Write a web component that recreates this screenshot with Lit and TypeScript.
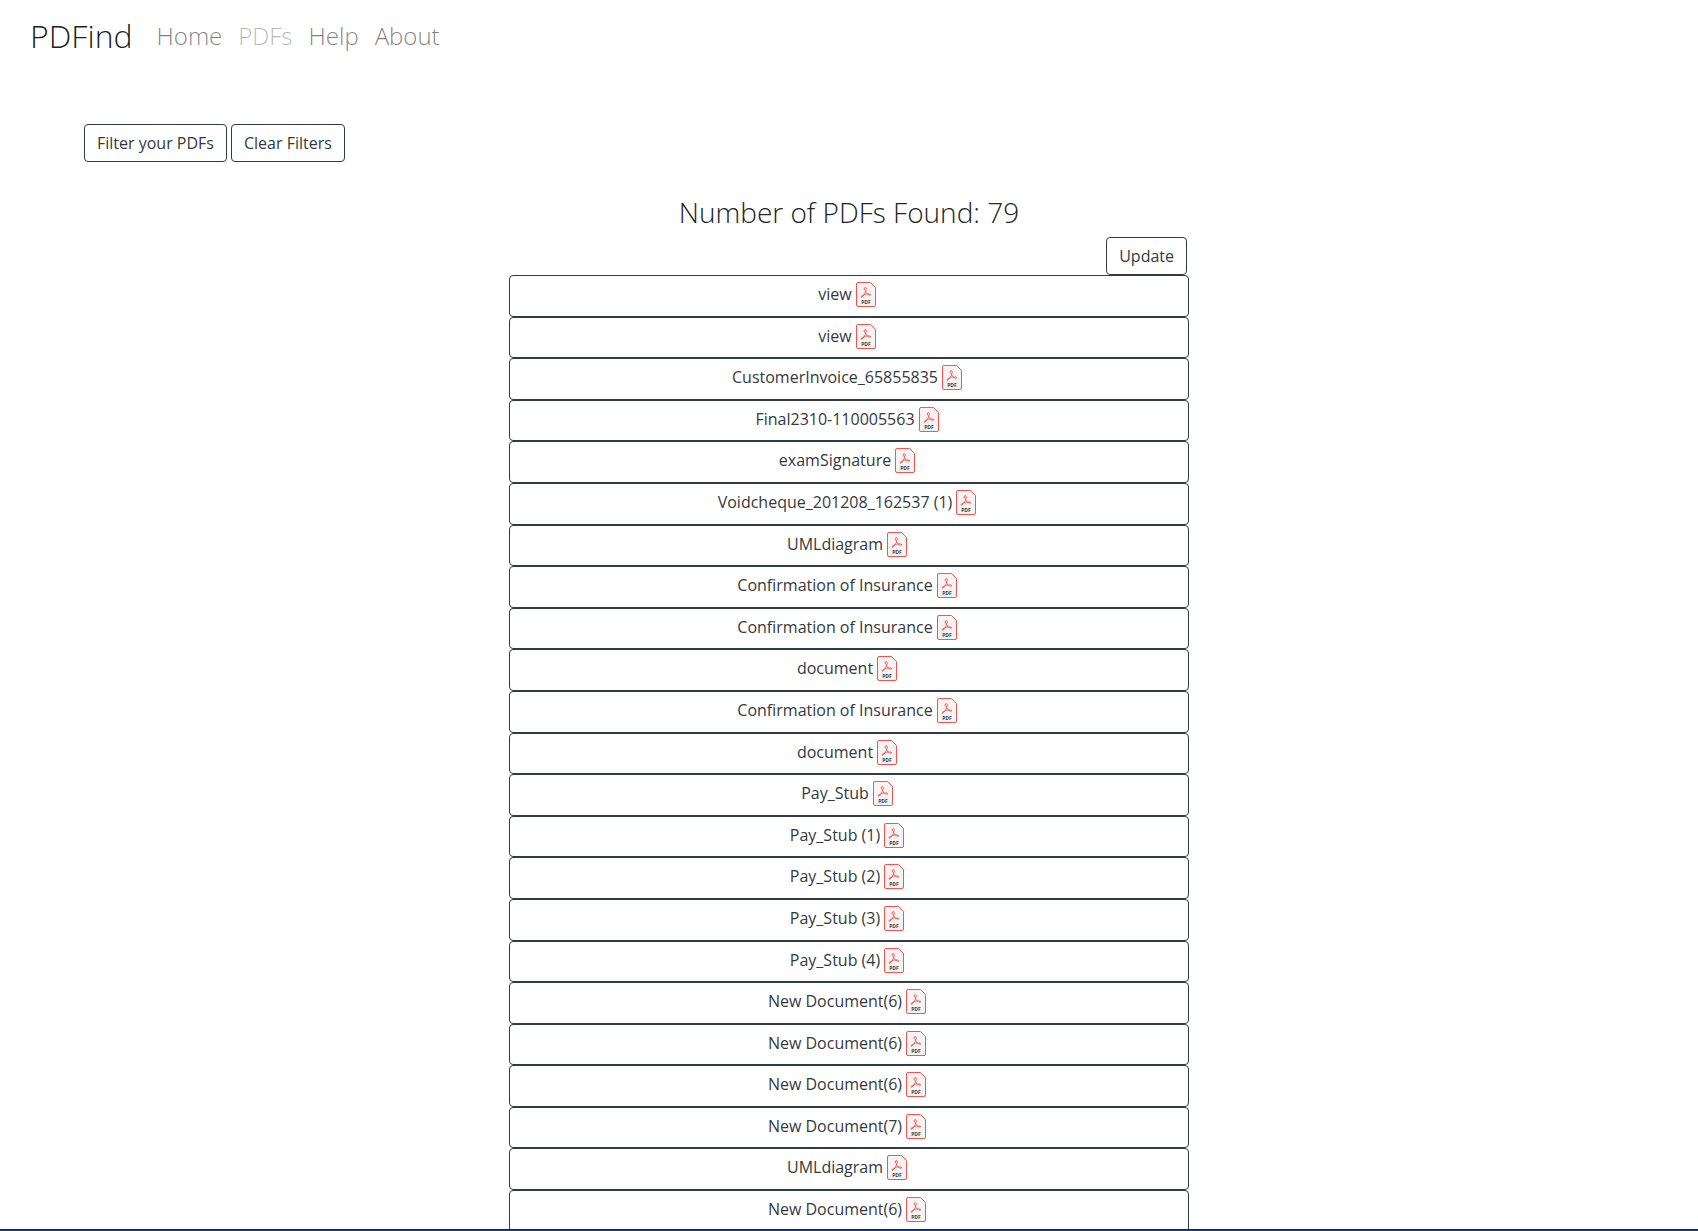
import { LitElement, html, css, svg } from "lit";
import { customElement, property } from "lit/decorators.js";

@customElement("pdf-icon")
class PdfIcon extends LitElement {
  static styles = css`
    :host { display: block; flex: none; width: 20px; height: 25px; }
    svg { display: block; width: 20px; height: 25px; }
    .sheet { fill: #f4f4f4; stroke: #ff5148; stroke-width: 1; }
    .ribbon { fill: none; stroke: #ff5148; stroke-width: 0.9; stroke-linejoin: round; }
    .label { font: 700 5px "Open Sans", sans-serif; fill: #3a3d42; text-anchor: middle; }
  `;

  render() {
    return html`<svg viewBox="0 0 20 25" aria-hidden="true">
      ${svg`
        <path class="sheet" d="M2 .5H14.5L19.5 5.500V23Q19.500 24.500 18 24.500H2Q.5 24.500 .5 23V2Q.5 .5 2 .5Z"/>
        <path class="ribbon" d="M9.300 8.500C7.600 8.200 7.800 5.500 9.300 5.500C11 5.500 10.100 8.500 9.300 10.500C8.300 13 6 15.600 5 15.200C4.200 14.500 7 12.800 9.800 12.200C12.300 11.700 14.800 11.800 14.800 12.900C14.300 14 11.300 12.400 10.100 10.800C9.500 9.900 9.300 9.200 9.300 8.500"/>
        <text class="label" x="10" y="22">PDF</text>`}
    </svg>`;
  }
}

@customElement("pdf-row")
class PdfRow extends LitElement {
  @property() name = "";

  static styles = css`
    :host { display: block; }
    .row {
      display: flex;
      justify-content: center;
      align-items: flex-start;
      gap: 4px;
      width: 100%;
      box-sizing: border-box;
      margin: 0;
      padding: 6px 16px 8px 12px;
      border: 1px solid #343a40;
      border-radius: 4px;
      background: transparent;
      color: #343a40;
      font: 400 16px/1.6 "Open Sans", sans-serif;
      cursor: pointer;
    }
  `;

  render() {
    return html`<button class="row" type="button"><span>${this.name}</span><pdf-icon></pdf-icon></button>`;
  }
}

@customElement("app-root")
class AppRoot extends LitElement {
  private files = [
    "view", "view", "CustomerInvoice_65855835", "Final2310-110005563",
    "examSignature", "Voidcheque_201208_162537 (1)", "UMLdiagram",
    "Confirmation of Insurance", "Confirmation of Insurance", "document",
    "Confirmation of Insurance", "document", "Pay_Stub", "Pay_Stub (1)",
    "Pay_Stub (2)", "Pay_Stub (3)", "Pay_Stub (4)", "New Document(6)",
    "New Document(6)", "New Document(6)", "New Document(7)", "UMLdiagram",
    "New Document(6)",
  ];

  static styles = css`
    :host {
      display: flex;
      flex-direction: column;
      height: 100vh;
      background: #fff;
      color: #212529;
      font: 400 16px/24px "Open Sans", sans-serif;
    }
    .nav {
      flex: none;
      display: flex;
      align-items: center;
      gap: 24px;
      padding: 12px 30px;
      font-weight: 300;
    }
    a { text-decoration: none; }
    .brand { font-size: 32px; line-height: 48px; color: rgba(0, 0, 0, 0.9); }
    .links { display: flex; gap: 16px; font-size: 24px; line-height: 36px; }
    .links a { color: rgba(0, 0, 0, 0.5); }
    .links .current { color: rgba(0, 0, 0, 0.3); }
    main { flex: 1; min-height: 0; overflow: hidden; }
    .filters { display: flex; gap: 4px; padding: 52px 84px 0; }
    .button {
      margin: 0;
      padding: 6px 12px;
      border: 1px solid #343a40;
      border-radius: 4px;
      background: transparent;
      color: #343a40;
      font: inherit;
      cursor: pointer;
    }
    .results { max-width: 680px; margin: 33px auto 0; }
    h1 { margin: 0; font-size: 28px; line-height: 34px; font-weight: 300; text-align: center; }
    .actions { display: flex; justify-content: flex-end; padding: 8px 2px 0; }
    ul { margin: 0; padding: 0; list-style: none; }
    .edge { flex: none; height: 1px; border-top: 1px solid #14263f; background: #1f3f77; }
  `;

  render() {
    return html`
      <nav class="nav">
        <a class="brand" href="#">PDFind</a>
        <div class="links">
          <a href="#home">Home</a>
          <a class="current" href="#pdfs" aria-current="page">PDFs</a>
          <a href="#help">Help</a>
          <a href="#about">About</a>
        </div>
      </nav>
      <main>
        <div class="filters">
          <button class="button" type="button">Filter your PDFs</button>
          <button class="button" type="button">Clear Filters</button>
        </div>
        <section class="results">
          <h1>Number of PDFs Found: 79</h1>
          <div class="actions"><button class="button" type="button">Update</button></div>
          <ul>
            ${this.files.map((name) => html`<li><pdf-row .name=${name}></pdf-row></li>`)}
          </ul>
        </section>
      </main>
      <footer class="edge"></footer>
    `;
  }
}
